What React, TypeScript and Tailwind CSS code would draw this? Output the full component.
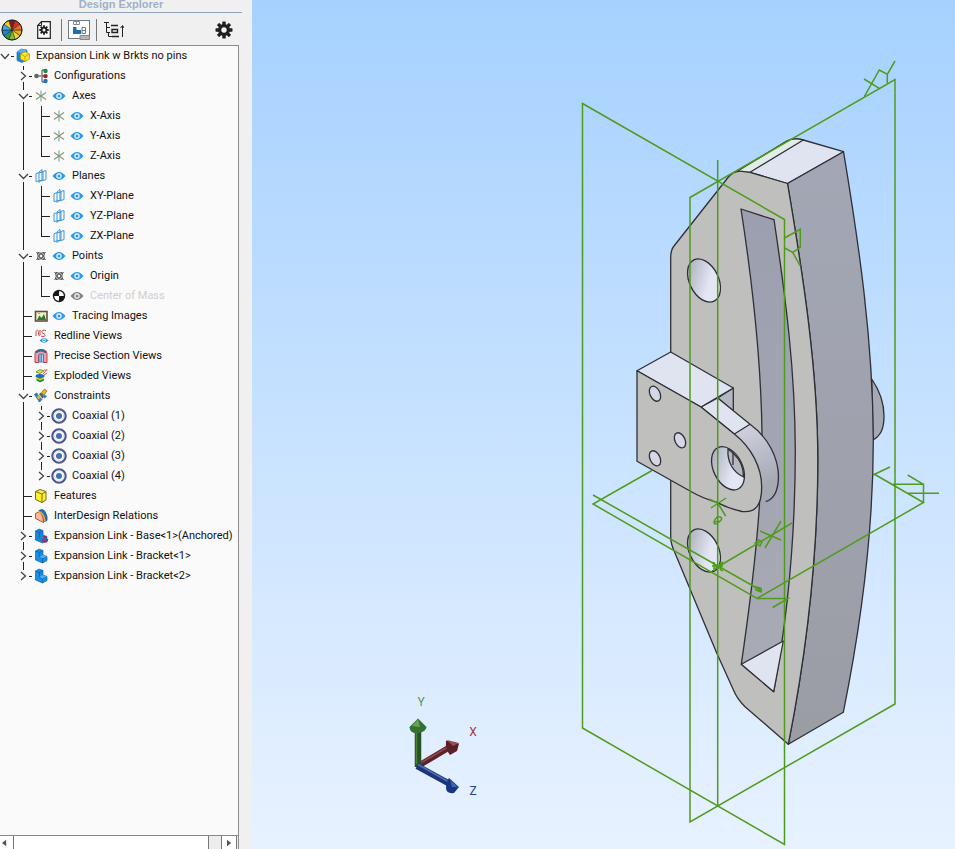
import { useState } from "react";
import type { ReactNode } from "react";

/* ---------- tree icons (18 x 18) ---------- */

function Svg({ children }: { children: ReactNode }) {
  return (
    <svg viewBox="0 0 18 18" className="h-[18px] w-[18px] shrink-0" fill="none" aria-hidden="true">
      {children}
    </svg>
  );
}

const AssemblyIcon = () => (
  <Svg>
    <path d="M3 5 7 2l6 1v10l-5 2.500-5-2z" fill="#1b84dc" stroke="#0f62ad" strokeWidth=".6" />
    <path d="M3 5 7 2l6 1-4 3z" fill="#56b4f5" />
    <path d="m6.500 7 4.500-2.500L15.500 7v5L11 14.500 6.500 12z" fill="#ffe62b" stroke="#a89600" strokeWidth=".7" />
    <path d="M6.500 7 11 9.500 15.500 7M11 9.500v5" stroke="#a89600" strokeWidth=".7" />
  </Svg>
);
const ConfigIcon = () => (
  <Svg>
    <path d="M5 9h4M13 3h-3v12h3M10 9h3" stroke="#444" />
    <circle cx="4.500" cy="9" r="2.300" fill="#666" />
    <circle cx="13.500" cy="4" r="2.200" fill="#1c8a4c" />
    <rect x="11.500" y="7.200" width="4" height="3.800" rx="1" fill="#a32020" />
    <circle cx="13.500" cy="14" r="2.200" fill="#2270b5" />
  </Svg>
);
const AxisIcon = () => (
  <Svg>
    <path d="M9 3.500v11" stroke="#6fb8ae" strokeWidth="1.200" />
    <path d="m4 5.500 10 7" stroke="#a98a78" strokeWidth="1.200" />
    <path d="m14 5.500-10 7" stroke="#7f9a7c" strokeWidth="1.200" />
  </Svg>
);
const PlaneIcon = () => (
  <Svg>
    <path d="M4 6.500 11 5v8l-7 1.500z" stroke="#3a97d8" />
    <path d="m7 5 3-2.500v10L7 15.500z" stroke="#3a97d8" />
    <path d="M9.500 5 14 3.500v9l-4.500 1.500" stroke="#3a97d8" />
  </Svg>
);
const PointIcon = () => (
  <Svg>
    <path d="m4.500 5 2 2M13.500 5l-2 2M4.500 13l2-2M13.500 13l-2-2" stroke="#333" />
    <path d="M6 5.500q3 1.500 6 0M6 12.500q3-1.500 6 0M5.500 6q1.500 3 0 6M12.500 6q-1.500 3 0 6" stroke="#444" />
    <circle cx="9" cy="9" r="2" stroke="#333" />
  </Svg>
);
const MassIcon = () => (
  <Svg>
    <circle cx="9" cy="9" r="5.500" fill="#fff" stroke="#222" strokeWidth="1.400" />
    <path d="M9 9V3.500A5.500 5.500 0 0 0 3.500 9zM9 9v5.500A5.500 5.500 0 0 0 14.500 9z" fill="#181818" />
  </Svg>
);
const ImageIcon = () => (
  <Svg>
    <rect x="3.500" y="4.500" width="11.500" height="9.500" fill="#eef3c4" stroke="#5a5048" strokeWidth="1.600" />
    <path d="m5 13 2.500-4.500 2 2.500 2.500-4 2 6z" fill="#2e762b" />
    <path d="M6 6.500h2" stroke="#e4a51c" />
  </Svg>
);
const RedlineIcon = () => (
  <Svg>
    <path d="M4 9V5.500c0-3 2.500-3 2.500 0v2c0 1.500 1.500 1.500 1.500 0V3M14 3.500c-3-1-5 .5-4 2s3.500 1 3 3-3 1-4 .5" stroke="#c9453f" />
    <path d="M7.500 13.500q4.500-5 9 0-4.500 4.500-9 0z" fill="#2b93e0" />
    <circle cx="12" cy="13.400" r="1.400" stroke="#fff" strokeWidth=".9" />
  </Svg>
);
const SectionIcon = () => (
  <Svg>
    <path d="M3 7q0-4.500 6-4.500T15 7v8.500h-3.500V8h-5v7.500H3z" fill="#f0a0aa" stroke="#c23c4c" />
    <path d="M7 15V7h4.500v8z" fill="#a9d5f2" stroke="#3078b0" strokeWidth=".8" />
    <path d="M4 5.500q5-4 10 0" stroke="#2d6a90" strokeWidth="2" />
    <path d="M9.200 7v8" stroke="#2a72b5" />
  </Svg>
);
const ExplodedIcon = () => (
  <Svg>
    <path d="m4 5 4-2.500 4 1.500-4 2.500z" fill="#e4df3a" stroke="#5f8f1d" strokeWidth=".8" />
    <ellipse cx="8" cy="9" rx="4.500" ry="2" fill="#1c6cbe" />
    <path d="m4.500 11 3.500-1 4 1v2.500L8 15.500l-3.500-2z" fill="#278d35" />
    <path d="m4.500 11 3.500 1.500 4-1.500" stroke="#ffd733" strokeWidth="1.200" />
    <path d="m11 7 3.500-4M12 3h3.500M11.500 8.500 15 6" stroke="#de5745" />
  </Svg>
);
const ConstraintIcon = () => (
  <Svg>
    <path d="m9.500 5.500 3-3.500 2.500 2-3 4z" fill="#efb429" stroke="#7f6014" strokeWidth=".7" />
    <path d="m7 7 2-1.500 3.500 4-2 2z" fill="#575d5a" />
    <path d="m2.500 7.500 2-1.500 5.500 6.500L7.500 15z" fill="#2c87cf" stroke="#17568d" strokeWidth=".7" />
    <path d="m4.500 10 2.500-2 2 2.500-2.500 2z" fill="#e5aa36" />
    <path d="m11 9 2-1.500 2 2-2.500 2z" fill="#2c87cf" />
  </Svg>
);
const CoaxialIcon = () => (
  <Svg>
    <circle cx="9" cy="9" r="6.700" fill="#fff" stroke="#47588f" strokeWidth="2.100" />
    <circle cx="9" cy="9" r="4.600" stroke="#f0d3e0" strokeWidth=".8" />
    <circle cx="9" cy="9" r="3" fill="#3b74b4" />
  </Svg>
);
const FeatureIcon = () => (
  <Svg>
    <path d="M3.500 4.500 8 2.500l6 2v8.500l-4 2.500-6.500-3z" fill="#fff12e" stroke="#746d12" />
    <path d="m3.500 4.500 6.500 2.500 4-2.500M10 7v8.500" stroke="#746d12" />
  </Svg>
);
const InterIcon = () => (
  <Svg>
    <path d="M7 3.500q4-2.500 6 1l2 5v4l-4 1.500z" fill="#2474b8" stroke="#184c80" strokeWidth=".8" />
    <path d="M3.500 6.500q3-3 5.500 0 2.500 3 2.500 9l-8-4z" fill="#f8b9a0" stroke="#c44d36" />
    <path d="M6 4.500q6 1 7 10" stroke="#edb52c" strokeWidth="1.300" />
  </Svg>
);
const PartIcon = () => (
  <Svg>
    <path d="m3.500 4 3.500-2 4 1.500v4.500l4 1.500v4L10.500 16l-7-3z" fill="#1b8ce2" stroke="#0f65ac" strokeWidth=".7" />
    <path d="M3.500 4 7.500 5.500l3.500-2M7.500 5.500v4.500l3 1.500L15 9.500M10.500 11.500V16" stroke="#0a5da0" strokeWidth=".7" />
    <path d="M7.500 10 11 8l4 1.500-4.500 2z" fill="#4bb0f4" />
  </Svg>
);
const AnchoredIcon = () => (
  <Svg>
    <path d="m3.500 4 3.500-2 4 1.500v4.500l4 1.500v4L10.500 16l-7-3z" fill="#1b84d8" stroke="#0f65ac" strokeWidth=".7" />
    <path d="M3.500 4 7.500 5.500l3.500-2M7.500 5.500v5" stroke="#0a5da0" strokeWidth=".7" />
    <path d="M13 9v5.500M10.500 12q0 3 2.500 3t2.500-3M11.500 10h3" stroke="#a52b52" strokeWidth="1.500" />
  </Svg>
);
const Eye = ({ off = false }: { off?: boolean }) => (
  <Svg>
    <path d="M2.500 9Q9 1.200 15.500 9 9 16.800 2.500 9z" fill={off ? "#858585" : "#2b98e8"} />
    <circle cx="9" cy="9" r="2.100" stroke="#f4f9fd" strokeWidth="1.200" />
  </Svg>
);

/* ---------- tree ---------- */

type Item = {
  label: string;
  icon: ReactNode;
  eye?: "on" | "off";
  closed?: boolean;
  children?: Item[];
};

const axis = (label: string): Item => ({ label, icon: <AxisIcon />, eye: "on" });
const plane = (label: string): Item => ({ label, icon: <PlaneIcon />, eye: "on" });
const coaxial = (n: number): Item => ({ label: `Coaxial (${n})`, icon: <CoaxialIcon />, closed: true });

const tree: Item[] = [
  { label: "Configurations", icon: <ConfigIcon />, closed: true },
  { label: "Axes", icon: <AxisIcon />, eye: "on", children: [axis("X-Axis"), axis("Y-Axis"), axis("Z-Axis")] },
  { label: "Planes", icon: <PlaneIcon />, eye: "on", children: [plane("XY-Plane"), plane("YZ-Plane"), plane("ZX-Plane")] },
  {
    label: "Points",
    icon: <PointIcon />,
    eye: "on",
    children: [
      { label: "Origin", icon: <PointIcon />, eye: "on" },
      { label: "Center of Mass", icon: <MassIcon />, eye: "off" },
    ],
  },
  { label: "Tracing Images", icon: <ImageIcon />, eye: "on" },
  { label: "Redline Views", icon: <RedlineIcon /> },
  { label: "Precise Section Views", icon: <SectionIcon /> },
  { label: "Exploded Views", icon: <ExplodedIcon /> },
  { label: "Constraints", icon: <ConstraintIcon />, children: [coaxial(1), coaxial(2), coaxial(3), coaxial(4)] },
  { label: "Features", icon: <FeatureIcon /> },
  { label: "InterDesign Relations", icon: <InterIcon /> },
  { label: "Expansion Link - Base<1>(Anchored)", icon: <AnchoredIcon />, closed: true },
  { label: "Expansion Link - Bracket<1>", icon: <PartIcon />, closed: true },
  { label: "Expansion Link - Bracket<2>", icon: <PartIcon />, closed: true },
];

function Branch({ d }: { d: string }) {
  return (
    <svg viewBox="0 0 18 20" className="h-5 w-[18px] shrink-0" fill="none" stroke="#222" aria-hidden="true">
      <path d={d} shapeRendering="crispEdges" />
    </svg>
  );
}

function Toggle({ label, open, last, onClick }: { label: string; open: boolean; last: boolean; onClick: () => void }) {
  return (
    <button type="button" aria-label={`Toggle ${label}`} aria-expanded={open} onClick={onClick} className="h-5 w-[18px] shrink-0">
      <svg viewBox="0 0 18 20" className="h-5 w-[18px]" fill="none" stroke="#222" aria-hidden="true">
        <path d={last ? "M9.500 0v4M15 10.500h3" : "M9.500 0v4M9.500 16v4M15 10.500h3"} shapeRendering="crispEdges" />
        <path d={open ? "m5 8 4.500 4.500L14 8" : "m7 6 4.500 4L7 14"} stroke="#444" strokeWidth="1.300" />
      </svg>
    </button>
  );
}

function Row({ item, last, nested }: { item: Item; last: boolean; nested: boolean }) {
  const expandable = Boolean(item.children || item.closed);
  const [open, setOpen] = useState(!item.closed);
  const [shown, setShown] = useState(item.eye !== "off");
  const kids = open && item.children ? item.children : [];
  return (
    <li>
      <div className="flex h-5 items-center whitespace-nowrap">
        <span className="w-[14px] shrink-0" />
        {nested && <Branch d="M9.500 0v20" />}
        {expandable ? (
          <Toggle label={item.label} open={open} last={last} onClick={() => setOpen(!open)} />
        ) : (
          <Branch d={last ? "M9.500 0v10.500H18" : "M9.500 0v20M9.500 10.500H18"} />
        )}
        {item.icon}
        {item.eye && (
          <button type="button" aria-label={`Show ${item.label}`} aria-pressed={shown} onClick={() => setShown(!shown)}>
            <Eye off={!shown} />
          </button>
        )}
        <span className={item.eye && !shown ? "ml-1 text-[#cfcfcf]" : "ml-1"}>{item.label}</span>
      </div>
      {kids.length > 0 && (
        <ul>
          {kids.map((k, i) => (
            <Row key={k.label} item={k} last={i === kids.length - 1} nested />
          ))}
        </ul>
      )}
    </li>
  );
}

/* ---------- toolbar ---------- */

const wheel = ["#f5a61d", "#f2d824", "#7fbf2f", "#2c9c46", "#1f86d6", "#3aa9ea", "#f0c92a", "#7f1d1d", "#d9301f", "#ee6a1e"];

function wedge(i: number) {
  const a = (i * Math.PI) / 5;
  const b = a + Math.PI / 5;
  return `M11 11 ${11 + 10 * Math.cos(a)} ${11 + 10 * Math.sin(a)}A10 10 0 0 1 ${11 + 10 * Math.cos(b)} ${11 + 10 * Math.sin(b)}z`;
}

function Gear({ size }: { size: "lg" | "sm" }) {
  return (
    <svg viewBox="-9 -9 18 18" className={size === "lg" ? "h-[18px] w-[18px]" : "h-[10px] w-[10px]"} aria-hidden="true">
      {[0, 45, 90, 135].map((r) => (
        <rect key={r} x="-1.700" y="-8.500" width="3.400" height="17" rx=".6" fill="#1f1f1f" transform={`rotate(${r})`} />
      ))}
      <circle r="4.300" fill="none" stroke="#1f1f1f" strokeWidth="3.400" />
      <circle r="2.700" fill="#f4f4f4" />
    </svg>
  );
}

function Toolbar() {
  return (
    <div className="flex h-8 items-center pt-[2px]">
      <button type="button" aria-label="Appearance" className="ml-px">
        <svg viewBox="0 0 22 22" className="h-[22px] w-[22px]" aria-hidden="true">
          {wheel.map((c, i) => (
            <path key={c} d={wedge(i)} fill={c} stroke="#222" strokeWidth=".5" />
          ))}
          <circle cx="11" cy="11" r="10" fill="none" stroke="#222" />
        </svg>
      </button>
      <button type="button" aria-label="Design properties" className="ml-[14px] grid place-items-center">
        <svg viewBox="0 0 14 18" className="col-start-1 row-start-1 h-[18px] w-[14px]" aria-hidden="true">
          <path d="M4.500.7h8.800v16.600H.7V4.500z" fill="#f8f8f8" stroke="#222" strokeWidth="1.200" />
          <path d="M4.500.7v3.800H.7" fill="none" stroke="#222" />
        </svg>
        <span className="col-start-1 row-start-1">
          <Gear size="sm" />
        </span>
      </button>
      <span className="ml-[10px] h-[22px] w-px bg-[#777]" />
      <button type="button" aria-label="Explorer view" aria-pressed="true" className="ml-[6px]">
        <svg viewBox="0 0 22 20" className="h-5 w-[22px]" fill="none" aria-hidden="true">
          <rect x=".5" y=".5" width="21" height="18" fill="#fff" stroke="#6c7c86" />
          <path d="M5.500 1.500h6v3h-6zM8.500 1.500v3" stroke="#889" />
          <path d="M5 7h3.500v3H13v4H5z" fill="#1d6cb0" />
          <path d="M14 7.500h3.500v6H14zM14 10.500h3.500" stroke="#777" />
          <path d="M12 15.500h9.500v4H12z" fill="#b5b5b5" stroke="#888" />
        </svg>
      </button>
      <span className="ml-[6px] h-[22px] w-px bg-[#777]" />
      <button type="button" aria-label="Expand levels" className="ml-[7px]">
        <svg viewBox="0 0 20 20" className="h-5 w-5" fill="none" stroke="#222" aria-hidden="true">
          <path d="M0 2.500h5M2.500 2.500v10H6M2.500 7.500H6M4.500 12.500v4H8M18.500 17V6M16.500 8l2-2.500 1.500 2.500" />
          <path d="M7 5.500h7M8 9.500h5.500v3H8zM8 16.500h7" strokeWidth="1.400" />
        </svg>
      </button>
      <button type="button" aria-label="Settings" className="mr-[9px] ml-auto">
        <Gear size="lg" />
      </button>
    </div>
  );
}

function ScrollBar() {
  return (
    <div className="flex h-[14px] shrink-0 border-t border-[#888] bg-[#ededed]">
      <button type="button" aria-label="Scroll left" className="w-[13px] bg-white pl-[2px]">
        <svg viewBox="0 0 6 8" className="h-2 w-[5px]" aria-hidden="true">
          <path d="M5 0v8L0 4z" fill="#555" />
        </svg>
      </button>
      <span className="mr-3 flex-1 border-x border-[#777] bg-white" />
      <button type="button" aria-label="Scroll right" className="mr-px w-4 border-x border-[#777] bg-white pl-[5px]">
        <svg viewBox="0 0 6 8" className="h-2 w-[5px]" aria-hidden="true">
          <path d="M0 0v8l5-4z" fill="#555" />
        </svg>
      </button>
    </div>
  );
}

/* ---------- 3D view ---------- */

function Model() {
  return (
    <g stroke="#2e3036" strokeWidth="1.300" strokeLinejoin="round">
      <path d="M871.700 379C880 391 884 402 884 416S880 436 873 440z" fill="#a6a9b3" />
      <path d="M736 172 787 141Q794 137.500 803.300 140L843.500 151.700 787.500 183.500 750 172.300z" fill="#e0e4f1" />
      <path d="M736 172 787 141Q794 137.500 803.300 140L750 172.300z" fill="#e2ede8" />
      <path d="M787.500 183.500 843.500 151.700C859 245 873 340 873.300 440C873.300 530 862 620 843.300 712.300L788.300 744.300C807 650 817.800 550 817.800 460C817.800 370 803 275 787.500 183.500z" fill="url(#side)" />
      <path d="M670.700 258Q670.700 250 674 246L728 177.500Q734 170.500 742 171.300L750 172.300 787.500 183.500C803 275 817.800 370 817.800 460C817.800 550 807 650 788.300 744.300L745 706.700Q737 699 733 689L716.700 653 675 553Q670.700 544 670.700 537z" fill="#bfbfbe" />
      <path d="M741 209 774 219.700C786 300 795 370 795.300 450C795.300 530 789 610 773.700 691.700L741.300 664.300C755 570 762 500 762 433C761 360 752 280 741 209z" fill="url(#slot)" />
      <path d="M741.300 664.300 783.300 641 773.700 691.700z" fill="#e0e4f1" />
      <g fill="url(#hole)">
        <ellipse cx="704" cy="280.500" rx="14.500" ry="23" transform="rotate(-26 704 280.500)" />
        <ellipse cx="704" cy="550.500" rx="14.500" ry="23" transform="rotate(-26 704 550.500)" />
      </g>
      <path d="M701 407 717.700 398 750 424.300C768 437 778.500 458 778.500 477Q778 498 765.700 501.700L740 480z" fill="url(#round)" stroke="none" />
      <path d="M717.700 398 733.300 388V411z" fill="#b4b7c1" />
      <path d="M701 407 717.700 398 750 424.300 734.300 434z" fill="#e0e4f1" />
      <path d="M750 424.300C768 437 778.500 458 778.500 477Q778 498 765.700 501.700" fill="none" />
      <path d="M637 370.700 670.700 352 733.300 388 701 407z" fill="#e0e4f1" />
      <path d="M637 370.700 701 407 734.300 434C751 447 761.700 467 761.700 487C761.700 506 755 513 742 511.500Q730 509 716.700 502.300 702 498 690 491L637 461.300z" fill="#bfbfbe" />
      <g fill="#d5d8e4">
        <ellipse cx="655" cy="393.700" rx="5" ry="8" transform="rotate(-26 655 393.700)" />
        <ellipse cx="680" cy="440.300" rx="5" ry="8" transform="rotate(-26 680 440.300)" />
        <ellipse cx="655" cy="458.300" rx="5" ry="8" transform="rotate(-26 655 458.300)" />
      </g>
      <ellipse cx="728" cy="468.300" rx="14.500" ry="23" transform="rotate(-26 728 468.300)" fill="url(#hole)" />
      <path d="M728 449C727 462 733 472 743.500 477Q744 463 733 453z" fill="#b7b8bf" />
      <path d="M733 453v12" />
    </g>
  );
}

function Planes() {
  return (
    <g fill="none" stroke="#4f9c1c" strokeWidth="1.500">
      <path d="M582.500 103.500 784.500 219.500V844.500L582.500 728z" />
      <path d="M690 197.500 895 79.500V704L690 822z" />
      <path d="M717.700 160V806" />
      <path d="M652 470.500 593 504 757 598.500 923.500 502.500 874 474M593 495 762 591M717.700 567 792 523" />
      <path d="M864 79 879.300 88.300M864.300 96.700 879.300 70 887.300 74.300V83M887.300 74.300 895 61" />
      <path d="M784.500 238 800.300 229.300V247.300L792.700 252.300 784.500 248M792.700 252.300 800.300 266" />
      <path d="M873 475 890 467M893 484.300H923.500V502.500M907.700 475 923.500 484.300M908 493.300H939" />
      <path d="M709 499 717.700 503M726 498 711 508M717.700 503 725.700 516M765 548 781 521M760 531 781 540" />
      <path d="M757 598.500H788L772.700 607.500" />
      <path d="M714 522q2-6 6-5t-1 5-5 0l5-1M755 543l4-3 3 2-2 4zM756 587l5 1v4l-5-2zM759 587v5" />
      <path d="M712 562 723 571M712 571 723 562M712 566h11M714 562v9M721 562v9" />
    </g>
  );
}

function Triad() {
  return (
    <g>
      <path d="M418 766 450 747" stroke="#5f2229" strokeWidth="6" />
      <path d="M418 764.500 449 746.500" stroke="#8d4950" strokeWidth="1.500" />
      <path d="M446 740.500 459 743.500 457 751 450 755Q445 749 446 740.500z" fill="#5c1f27" />
      <path d="M447 740 459 743 453 746z" fill="#9a4e56" />
      <path d="M418 767V729" stroke="#275222" strokeWidth="6.500" />
      <path d="M416.500 764V730" stroke="#4d7c3b" strokeWidth="1.500" />
      <path d="M409.500 727 418 718.500 426.500 727Q426 732 418 733T409.500 727z" fill="#347231" />
      <path d="M412 726 418 719 420 727z" fill="#6aa255" />
      <path d="M417 766 449 783.500" stroke="#1b3577" strokeWidth="6" />
      <path d="M418 764.500 449 782" stroke="#4f6fb4" strokeWidth="1.500" />
      <path d="M449 778 459 787 454 793Q446 794 446 788T449 778z" fill="#173684" />
      <path d="M450 780 458 787 452 787z" fill="#4166b4" />
      <g className="font-[Roboto,'Liberation_Sans',sans-serif] text-[12px]" textAnchor="middle">
        <text x="421" y="706" fill="#5a9352">Y</text>
        <text x="473" y="736" fill="#a03346">X</text>
        <text x="473" y="795" fill="#2a4595">Z</text>
      </g>
    </g>
  );
}

function Viewport() {
  return (
    <main className="min-w-0 flex-1 bg-linear-to-b from-[#a6d1ff] to-[#e8f2ff]">
      <svg viewBox="252 0 703 849" className="block h-full w-full" role="img" aria-label="Expansion link assembly">
        <defs>
          <linearGradient id="side" x1="0" y1="0" x2="0" y2="1">
            <stop offset="0" stopColor="#a3a7b5" />
            <stop offset="1" stopColor="#9b9da5" />
          </linearGradient>
          <linearGradient id="slot" x1="0" y1="0" x2="0" y2="1">
            <stop offset="0" stopColor="#9b9faf" />
            <stop offset="1" stopColor="#a9abb4" />
          </linearGradient>
          <linearGradient id="hole" x1="0" y1="0" x2=".7" y2="1">
            <stop offset=".1" stopColor="#a9abb9" />
            <stop offset=".7" stopColor="#e3e6f3" />
          </linearGradient>
          <linearGradient id="round" x1="0" y1="0" x2=".3" y2="1">
            <stop offset=".3" stopColor="#d6d9e6" />
            <stop offset="1" stopColor="#a6a8b2" />
          </linearGradient>
        </defs>
        <Model />
        <Planes />
        <Triad />
      </svg>
    </main>
  );
}

export default function App() {
  const [open, setOpen] = useState(true);
  return (
    <div className="flex h-screen overflow-hidden bg-[#f0f0f0] font-[Roboto,'Liberation_Sans',sans-serif] text-[11px] leading-5 text-[#111]">
      <aside className="flex w-[252px] shrink-0 flex-col pr-[10px]">
        <header className="flex h-[13px] items-start justify-center border-b border-[#8fa3ba]">
          <h1 className="font-['Liberation_Sans',Arial,sans-serif] text-[11px] leading-2 font-bold text-[#9fb1c8]">Design Explorer</h1>
        </header>
        <Toolbar />
        <div className="mr-[3px] flex min-h-0 flex-1 flex-col border-t border-r border-[#8c8c8c] bg-[#fafafa]">
          <nav className="min-h-0 flex-1 overflow-hidden" aria-label="Design tree">
            <div className="flex h-5 items-center whitespace-nowrap">
              <button type="button" aria-label="Toggle assembly" aria-expanded={open} onClick={() => setOpen(!open)} className="h-5 w-[14px] shrink-0">
                <svg viewBox="0 0 14 20" className="h-5 w-[14px]" fill="none" stroke="#222" aria-hidden="true">
                  <path d={open ? "m1 8 4 4.500L9 8" : "m3 5.500 5 4.500-5 4.500"} stroke="#444" strokeWidth="1.300" />
                  <path d="M11 10.500h3" shapeRendering="crispEdges" />
                </svg>
              </button>
              <AssemblyIcon />
              <span className="ml-1">Expansion Link w Brkts no pins</span>
            </div>
            {open && (
              <ul>
                {tree.map((item, i) => (
                  <Row key={item.label} item={item} last={i === tree.length - 1} nested={false} />
                ))}
              </ul>
            )}
          </nav>
          <ScrollBar />
        </div>
      </aside>
      <Viewport />
    </div>
  );
}
